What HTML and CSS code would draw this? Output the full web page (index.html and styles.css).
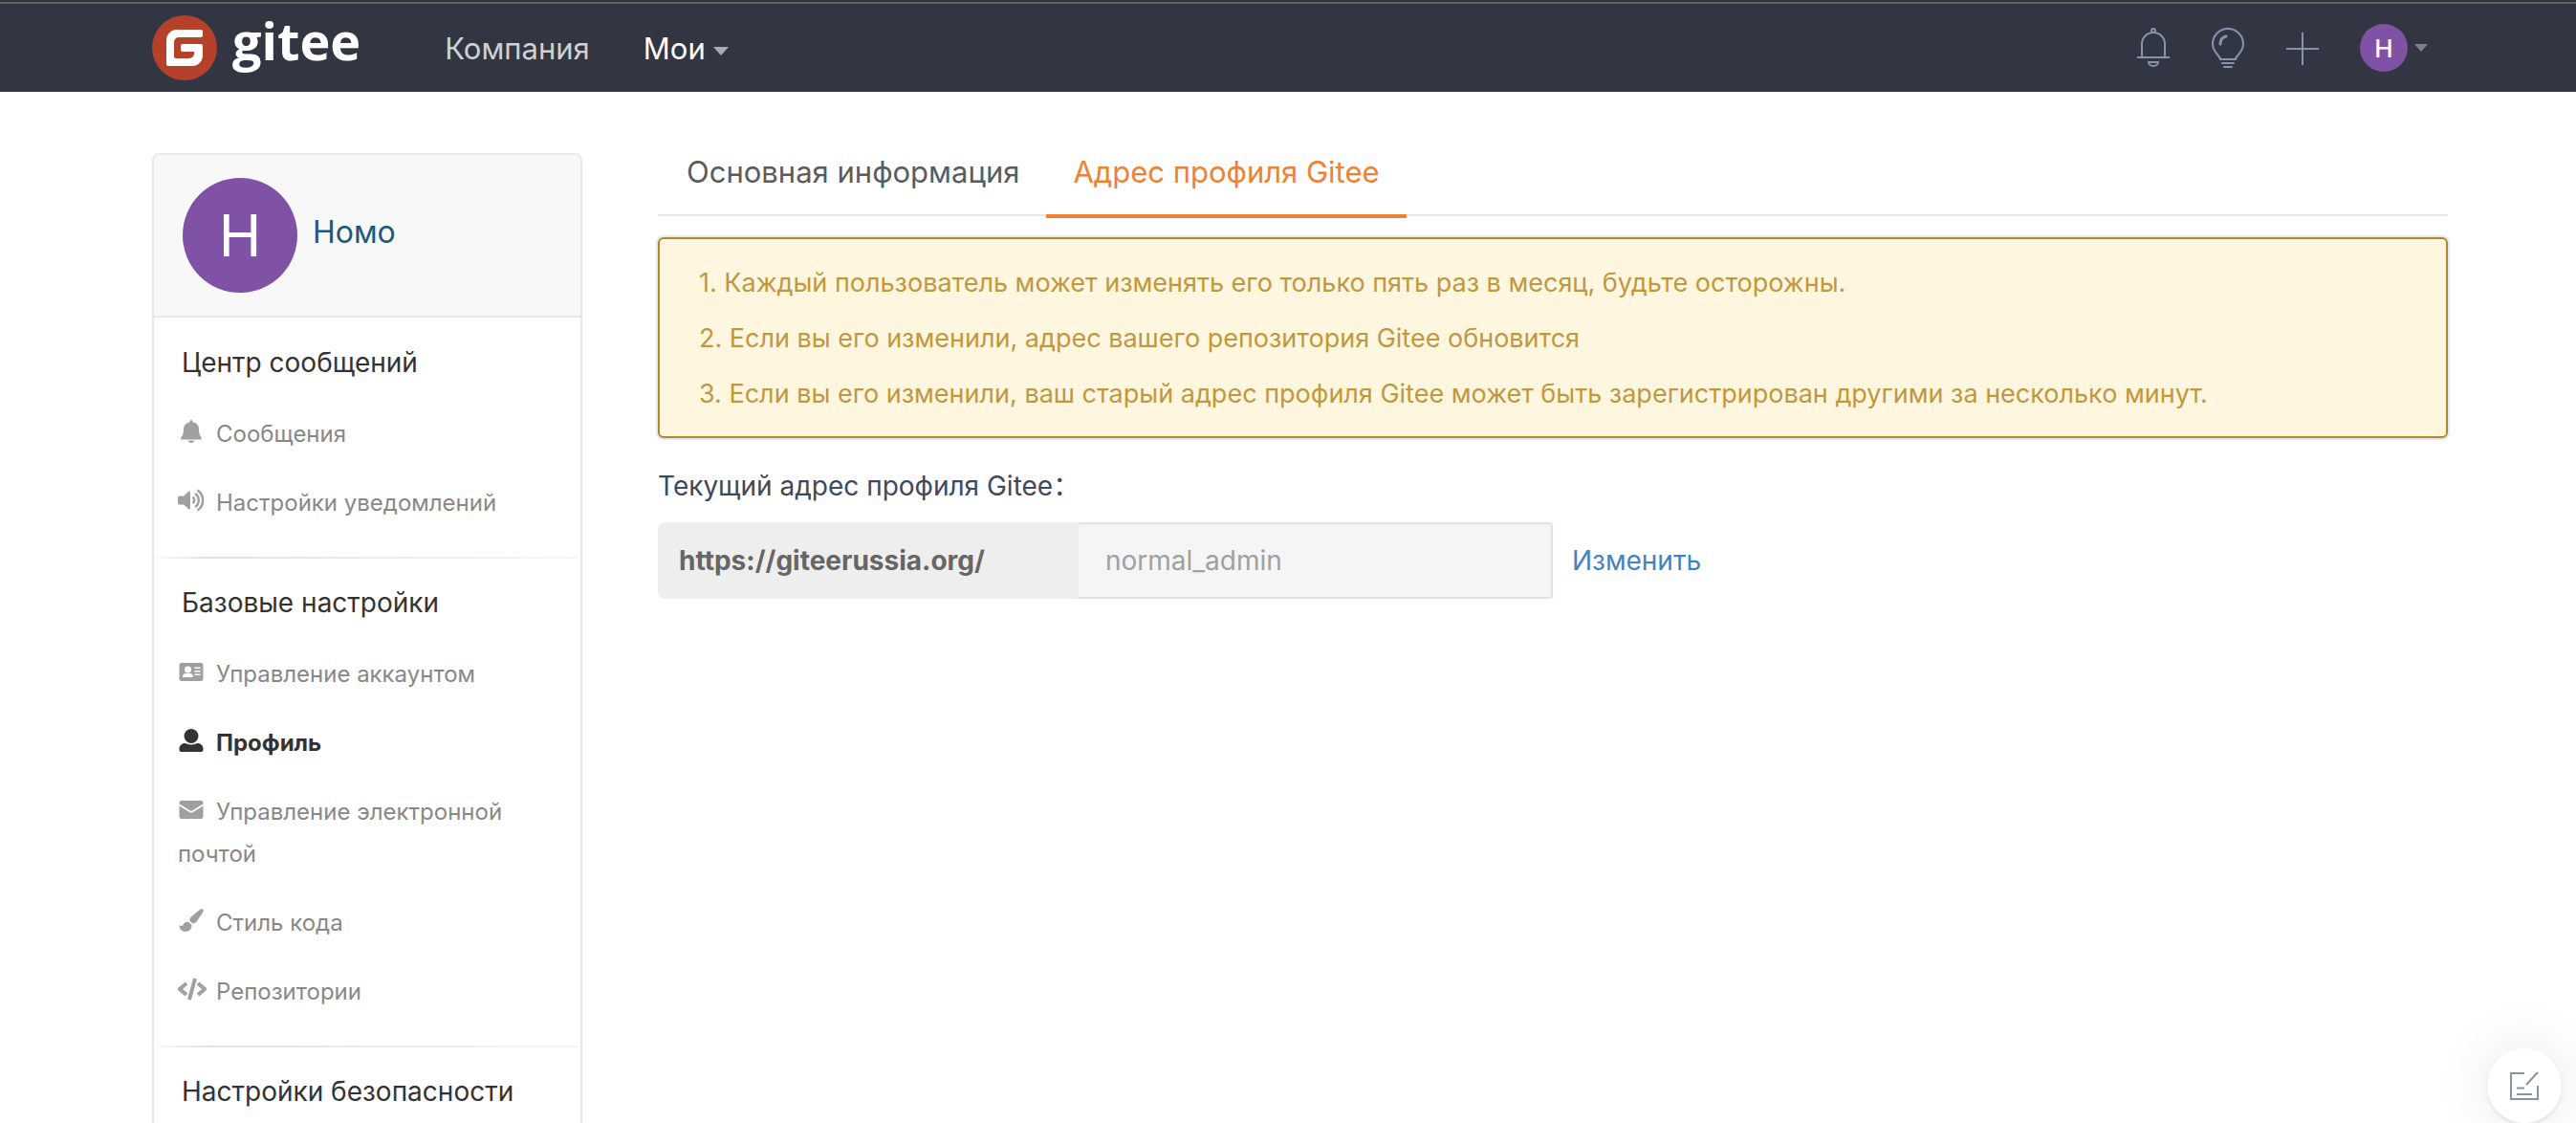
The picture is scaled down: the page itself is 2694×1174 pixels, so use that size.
FILE: index.html
```html
<!DOCTYPE html>
<html lang="ru">
<head>
<meta charset="utf-8">
<meta name="viewport" content="width=device-width, initial-scale=1">
<title>Адрес профиля Gitee</title>
<link rel="stylesheet" href="styles.css">
</head>
<body>
<header class="topbar">
  <a class="brand" href="#" aria-label="gitee">
    <svg class="brand-mark" viewBox="0 0 68 68" aria-hidden="true">
      <circle cx="34" cy="34" r="34" fill="#b5412a"/>
      <path fill="#fff" d="M26 15h25a2 2 0 0 1 2 2v4a2 2 0 0 1-2 2H28a5 5 0 0 0-5 5v15a2 2 0 0 0 2 2h14a5 5 0 0 0 5-5v-2H32a2 2 0 0 1-2-2v-4a2 2 0 0 1 2-2h19a2 2 0 0 1 2 2v10a11 11 0 0 1-11 11H17a2 2 0 0 1-2-2V26a11 11 0 0 1 11-11z"/>
    </svg>
    <span class="brand-name">gitee</span>
  </a>
  <nav class="topnav">
    <a class="topnav-link" href="#">Компания</a>
    <a class="topnav-link topnav-link-active" href="#">Мои<span class="caret"></span></a>
  </nav>
  <div class="tools">
    <button class="tool" type="button" aria-label="Уведомления">
      <svg class="tool-icon" viewBox="0 0 36 44" fill="none" stroke="#8a92a5" stroke-width="2">
        <circle cx="18" cy="4" r="2"/>
        <path d="M6 32V18a12 12 0 0 1 24 0v14M1 32h34M13 37h10a5 4 0 0 1-10 0z"/>
      </svg>
    </button>
    <button class="tool" type="button" aria-label="Подсказки">
      <svg class="tool-icon" viewBox="0 0 36 44" fill="none" stroke="#8a92a5" stroke-width="2" stroke-linecap="round">
        <path d="M10 34c0-4-8-7-8-16a16 16 0 0 1 32 0c0 9-8 12-8 16zM12 38h12M14 42h8"/>
        <path stroke-width="3" d="M10 18c0-4 2-7 6-8"/>
      </svg>
    </button>
    <button class="tool" type="button" aria-label="Создать">
      <svg class="tool-icon" viewBox="0 0 36 44" fill="none" stroke="#8a92a5" stroke-width="2">
        <path d="M1 23h34M18 6v34"/>
      </svg>
    </button>
    <button class="account" type="button" aria-label="Меню пользователя"><span class="avatar avatar-small">Н</span><span class="caret caret-dim"></span></button>
  </div>
</header>

<div class="page">
  <aside class="sidebar">
    <div class="user">
      <span class="avatar avatar-large">Н</span>
      <a class="user-name" href="#">Номо</a>
    </div>
    <section class="group">
      <h2 class="group-title">Центр сообщений</h2>
      <a class="item" href="#"><svg class="item-icon" viewBox="0 0 28 24"><path d="M14 0a1.500 1.500 0 0 1 1.500 1.500v.7C20 3 22 6 22 9.500c0 5 1 7 2.600 8.700.7.900.3 2.300-1 2.300H4.400c-1.300 0-1.700-1.400-1-2.300C5 16.500 6 14.500 6 9.500 6 6 8.500 3 12.500 2.200v-.7A1.500 1.500 0 0 1 14 0zM11 21.500h6a3 2.500 0 0 1-6 0z"/></svg>Сообщения</a>
      <a class="item" href="#"><svg class="item-icon" viewBox="0 0 28 24"><path d="M1.500 7.500H6l5-4.600c.8-.8 2-.3 2 .8v16.600c0 1.100-1.200 1.600-2 .8l-5-4.600H1.500A1.500 1.500 0 0 1 0 15V9a1.500 1.500 0 0 1 1.500-1.500z"/><path class="line" d="M15.500 8.700c2.300 1.500 2.300 5 0 6.600M18 5c5 3.200 5 10.800 0 14M20.500 1.500c7.500 4.800 7.500 16.200 0 21"/></svg>Настройки уведомлений</a>
    </section>
    <section class="group">
      <h2 class="group-title">Базовые настройки</h2>
      <a class="item" href="#"><svg class="item-icon" viewBox="0 0 28 24"><path fill-rule="evenodd" d="M4 3h20a2.500 2.500 0 0 1 2.500 2.500v14A2.500 2.500 0 0 1 24 22H4a2.500 2.500 0 0 1-2.500-2.500v-14A2.500 2.500 0 0 1 4 3zm6.500 3.500a3.500 3.500 0 1 0 0 7 3.500 3.500 0 0 0 0-7zM5 18h11c0-2-1-4-3-4H8c-2 0-3 2-3 4zM17.500 7.500V9h6V7.500zm0 3.500v1.500h6V11zm0 3.500V16h6v-1.500z"/></svg>Управление аккаунтом</a>
      <a class="item item-active" href="#" aria-current="page"><svg class="item-icon" viewBox="0 0 28 24"><circle cx="14" cy="7.500" r="7.500"/><path d="M7.500 15c2 .5 4 1.500 6.500 1.500s4.500-1 6.500-1.500c3.500 0 6 2.500 6 6v1a2 2 0 0 1-2 2h-21a2 2 0 0 1-2-2v-1c0-3.500 2.500-6 6-6z"/></svg>Профиль</a>
      <a class="item" href="#"><svg class="item-icon" viewBox="0 0 28 24"><path d="M4 3h20a2.500 2.500 0 0 1 2.500 2.500v1L14 14 1.500 6.500v-1A2.500 2.500 0 0 1 4 3zM1.500 8.500l11 6.800c1 .6 2 .6 3 0l11-6.800v11A2.500 2.500 0 0 1 24 22H4a2.500 2.500 0 0 1-2.500-2.500z"/></svg>Управление электронной почтой</a>
      <a class="item" href="#"><svg class="item-icon" viewBox="0 0 28 24"><path d="M26 .6c1 .8.800 2 .2 3.100L20 13c-1 1.500-2.600 2.300-4.500 2.500L12.300 12.500c0-2 .9-3.500 2.400-4.700L23.300.8c.8-.6 1.900-.8 2.700-.2zM11 13.800l3.500 3.300c.5 4.200-2.500 6.900-6.500 6.900-4.500 0-6.300-3-6.500-7 1.500 1 2.700 1.500 3.700.2 1.100-2.500 3.300-3.900 5.800-3.400z"/></svg>Стиль кода</a>
      <a class="item" href="#"><svg class="item-icon item-icon-wide" viewBox="0 0 30 24"><path class="line line-bold" d="M9 6 2 12l7 6M21 6l7 6-7 6M18 1l-6 22"/></svg>Репозитории</a>
    </section>
    <section class="group">
      <h2 class="group-title">Настройки безопасности</h2>
    </section>
  </aside>

  <main class="content">
    <nav class="tabs">
      <a class="tab" href="#">Основная информация</a>
      <a class="tab tab-active" href="#" aria-current="page">Адрес профиля Gitee</a>
    </nav>
    <div class="notice">
      <p class="notice-line">1. Каждый пользователь может изменять его только пять раз в месяц, будьте осторожны.</p>
      <p class="notice-line">2. Если вы его изменили, адрес вашего репозитория Gitee обновится</p>
      <p class="notice-line">3. Если вы его изменили, ваш старый адрес профиля Gitee может быть зарегистрирован другими за несколько минут.</p>
    </div>
    <form class="address">
      <label class="address-label" for="profile-path">Текущий адрес профиля Gitee：</label>
      <div class="address-row">
        <span class="address-prefix">https://giteerussia.org/</span>
        <input class="address-input" id="profile-path" type="text" value="normal_admin" disabled>
        <a class="address-edit" href="#">Изменить</a>
      </div>
    </form>
  </main>
</div>

<button class="feedback" type="button" aria-label="Обратная связь">
  <svg class="feedback-icon" viewBox="0 0 30 30" fill="none" stroke="#8a92a5" stroke-width="2">
    <path d="M15 2H1v27h28V15M17 14 29 1M7 17.500h8M7 24h16"/>
  </svg>
</button>
</body>
</html>
```
FILE: styles.css
```css
* {
  box-sizing: border-box;
}

body {
  margin: 0;
  min-height: 100vh;
  display: flex;
  flex-direction: column;
  background: #fff;
  color: #40485b;
  font-family: Inter, "Noto Sans", "Noto Sans CJK SC", sans-serif;
  font-size: 28px;
}

a {
  text-decoration: none;
}

button {
  padding: 0;
  border: 0;
  background: none;
  font: inherit;
  cursor: pointer;
}

.topbar {
  display: flex;
  align-items: center;
  height: 96px;
  padding: 4px 155px 0 159px;
  background: linear-gradient(#36373b 2px, #5d6365 2px, #5d6365 4px, #313642 4px);
}

.brand {
  display: flex;
  align-items: center;
  gap: 16px;
  color: #fff;
}

.brand-mark {
  width: 68px;
  height: 68px;
}

.brand-name {
  padding-bottom: 16px;
  font-family: "Open Sans", sans-serif;
  font-size: 54px;
  font-weight: 700;
  line-height: 60px;
}

.topnav {
  display: flex;
  gap: 56px;
  margin-left: 88px;
  font-size: 31px;
}

.topnav-link {
  display: flex;
  align-items: center;
  gap: 8px;
  color: #d0d1d4;
}

.topnav-link-active {
  color: #fff;
}

.caret {
  margin-top: 6px;
  border: 8px solid transparent;
  border-top: 9px solid #a9abb1;
  border-bottom: 0;
}

.tools {
  display: flex;
  align-items: center;
  gap: 42px;
  margin-left: auto;
}

.tool-icon {
  display: block;
  width: 36px;
  height: 44px;
}

.account {
  display: flex;
  align-items: center;
  gap: 7px;
}

.caret-dim {
  margin-top: 0;
  border-width: 8px 7px 0;
  border-top-color: #7b808c;
}

.avatar {
  display: flex;
  flex: none;
  align-items: center;
  justify-content: center;
  border-radius: 50%;
  background: #8052a5;
  color: #fff;
}

.avatar-small {
  width: 50px;
  height: 50px;
  font-size: 26px;
  font-weight: 500;
}

.avatar-large {
  width: 120px;
  height: 120px;
  font-size: 60px;
}

.page {
  flex: 1;
  display: flex;
  gap: 79px;
  padding: 64px 134px 0 159px;
}

.sidebar {
  flex: none;
  width: 450px;
  border: 2px solid #e3e9ed;
  border-bottom: 0;
  border-radius: 8px 8px 0 0;
}

.user {
  display: flex;
  align-items: center;
  gap: 16px;
  height: 170px;
  padding: 0 30px;
  border-bottom: 2px solid #e3e9ed;
  border-radius: 6px 6px 0 0;
  background: #f8f8f8;
}

.user-name {
  padding-bottom: 8px;
  color: #1f587e;
  font-size: 32px;
}

.group {
  padding: 29px 25px 21px;
}

.group + .group {
  position: relative;
}

.group + .group::before {
  content: "";
  position: absolute;
  top: -1px;
  right: 2px;
  left: 2px;
  height: 2px;
  background: linear-gradient(90deg, #fafafa, #e2e2e2 12%, #f6f6f6);
}

.group-title {
  margin: 0 0 21px 4px;
  color: #333;
  font-size: 28px;
  font-weight: 400;
  line-height: 36px;
}

.item {
  display: block;
  padding: 14px 0;
  color: #888;
  font-size: 24px;
  line-height: 44px;
}

.item-icon {
  width: 28px;
  height: 24px;
  margin-right: 12px;
  fill: #a0a0a0;
  vertical-align: -1px;
}

.item-icon-wide {
  width: 30px;
  margin-right: 10px;
}

.item-icon .line {
  fill: none;
  stroke: #a0a0a0;
  stroke-width: 2.500;
}

.item-icon .line-bold {
  stroke-width: 4;
}

.item-active {
  color: #333;
  font-weight: 700;
}

.item-active .item-icon {
  fill: #333;
}

.content {
  flex: 1;
  min-width: 0;
}

.tabs {
  display: flex;
  margin-bottom: 22px;
  padding-left: 2px;
  border-bottom: 2px solid #e6e6e6;
}

.tab {
  height: 68px;
  margin-bottom: -4px;
  padding: 0 28px;
  border-bottom: 4px solid transparent;
  color: #5a5b5d;
  font-size: 31px;
  line-height: 40px;
}

.tab-active {
  border-bottom-color: #ed8233;
  color: #ed8233;
}

.notice {
  padding: 17px 41px 15px;
  border: 2px solid #b3882b;
  border-radius: 6px;
  background: #fff6df;
  box-shadow: 0 0 0 2px #e3e9ed;
  color: #bf9840;
  font-size: 27px;
}

.notice-line {
  margin: 0;
  line-height: 58px;
}

.address {
  margin-top: 28px;
}

.address-label {
  display: block;
  line-height: 44px;
}

.address-row {
  display: flex;
  align-items: center;
  height: 80px;
  margin-top: 16px;
}

.address-prefix {
  width: 440px;
  padding: 0 22px;
  border-radius: 8px 0 0 8px;
  background: #eee;
  color: #666;
  font-weight: 700;
  line-height: 80px;
}

.address-input {
  width: 496px;
  height: 80px;
  padding: 0 28px;
  border: 2px solid #dde3ec;
  border-left: 0;
  border-radius: 0 4px 4px 0;
  background: #f5f5f5;
  color: #a0a0a0;
  font: inherit;
}

.address-edit {
  margin-left: 20px;
  color: #4183c4;
}

.feedback {
  position: fixed;
  right: 15px;
  bottom: 0;
  display: flex;
  align-items: center;
  justify-content: center;
  width: 78px;
  height: 78px;
  border-radius: 50%;
  background: #fff;
  box-shadow: 0 2px 4px rgba(0, 0, 0, .1), 0 0 60px rgba(0, 0, 0, .1);
}

.feedback-icon {
  width: 30px;
  height: 30px;
}
```
